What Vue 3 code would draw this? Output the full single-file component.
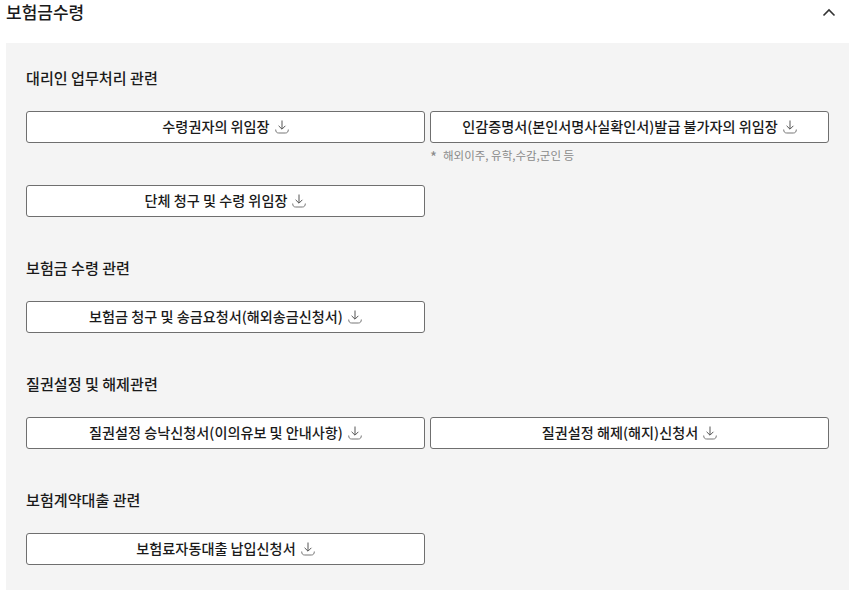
<template>
  <div class="page">
    <div class="head">
      <h2 class="title">보험금수령</h2>
      <svg class="chevron" width="14" height="9" viewBox="0 0 14 9" fill="none">
        <path d="M1.5 7.5L7 2l5.5 5.5" stroke="#333" stroke-width="1.6" />
      </svg>
    </div>

    <div class="panel">
      <section v-for="group in groups" :key="group.title" class="group">
        <h3 class="group-title">{{ group.title }}</h3>
        <div class="grid">
          <div v-for="file in group.files" :key="file.name" class="cell">
            <button class="btn" type="button">
              <span class="btn-label">{{ file.name }}</span>
              <svg class="icon" width="14" height="14" viewBox="0 0 14 14" fill="none">
                <path d="M7 .5v8.5M3.6 5.8L7 9.2l3.4-3.4" stroke="#555" stroke-width="1" />
                <path d="M.7 9.5c0 2.4 1 3.5 3 3.5h6.6c2 0 3-1.1 3-3.5" stroke="#777" stroke-width="1" />
              </svg>
            </button>
            <p v-if="file.note" class="note"><span class="star">*</span>{{ file.note }}</p>
          </div>
        </div>
      </section>
    </div>
  </div>
</template>

<script setup>
const groups = [
  {
    title: "대리인 업무처리 관련",
    files: [
      { name: "수령권자의 위임장" },
      { name: "인감증명서(본인서명사실확인서)발급 불가자의 위임장", note: "해외이주, 유학,수감,군인 등" },
      { name: "단체 청구 및 수령 위임장" },
    ],
  },
  {
    title: "보험금 수령 관련",
    files: [{ name: "보험금 청구 및 송금요청서(해외송금신청서)" }],
  },
  {
    title: "질권설정 및 해제관련",
    files: [
      { name: "질권설정 승낙신청서(이의유보 및 안내사항)" },
      { name: "질권설정 해제(해지)신청서" },
    ],
  },
  {
    title: "보험계약대출 관련",
    files: [{ name: "보험료자동대출 납입신청서" }],
  },
];
</script>

<style>
html,
body {
  margin: 0;
  background: #fff;
  overflow: hidden;
}
</style>

<style scoped>
.page {
  height: 590px;
  padding: 0 4px 0 6px;
  overflow: hidden;
  font-family: "Noto Sans CJK KR", "Noto Sans", sans-serif;
  color: #1a1a1a;
}
.head {
  height: 43px;
  display: flex;
  justify-content: space-between;
  box-sizing: border-box;
}
.title {
  margin: 0;
  font-size: 17px;
  line-height: 24px;
  font-weight: 500;
}
.chevron {
  margin: 8px 13px 0 0;
}
.panel {
  background: #f4f4f4;
  padding: 24px 20px;
  height: 100%;
}
.group + .group {
  margin-top: 40px;
}
.group-title {
  margin: 0 0 22px;
  font-size: 15.1px;
  line-height: 21px;
  padding-bottom: 1px;
  font-weight: 500;
}
.grid {
  display: grid;
  grid-template-columns: 399px 399px;
  column-gap: 5px;
  row-gap: 20px;
}
.btn {
  width: 100%;
  height: 32px;
  box-sizing: border-box;
  display: flex;
  align-items: center;
  justify-content: center;
  gap: 5px;
  padding: 0;
  background: #fff;
  border: 1px solid #6f6f6f;
  border-radius: 3px;
  font-family: inherit;
  font-size: 14.15px;
  font-weight: 500;
  color: #1a1a1a;
}
.btn-label {
  line-height: 20px;
  padding-bottom: 2px;
}
.icon {
  flex: none;
}
.note {
  margin: 3px 0 1px;
  font-size: 11.5px;
  line-height: 18px;
  color: #8a8a8a;
}
.star {
  display: inline-block;
  width: 13px;
  font-size: 15px;
  line-height: 0;
  vertical-align: -3px;
}
</style>
